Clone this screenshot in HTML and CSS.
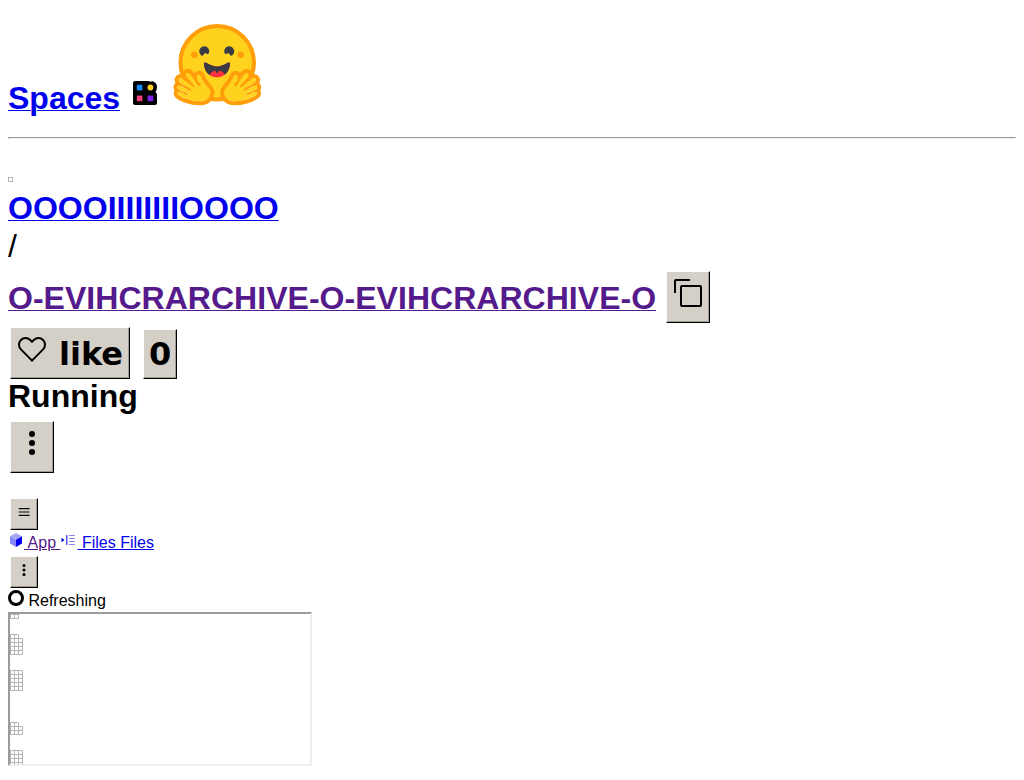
FILE: index.html
```html
<!DOCTYPE html>
<html lang="en">
<head>
<meta charset="utf-8">
<title>Spaces</title>
<link rel="stylesheet" href="styles.css">
</head>
<body>
<header class="top">
<a class="spaces" href="#top">Spaces</a>
<svg class="icon-lg" viewBox="0 0 32 32"><path d="M6 4H19Q21 4 21.500 4.800Q23 4 24 4.400Q28 5.500 28 10Q28 13 26.500 15Q28 16 28 18V26Q28 28 26 28H6Q4 28 4 26V6Q4 4 6 4Z"/><path fill="#0e88ff" d="M7.800 7.800h5.600v5.600H7.800z"/><circle cx="21.400" cy="10.500" r="2.900" fill="#ffd21e"/><path fill="#f1407b" d="M7.800 18.600h5.600v5.600H7.800z"/><path fill="#8020e8" d="M18.600 18.600h5.600v5.600h-5.600z"/></svg>
<svg class="face" viewBox="0 0 95 88"><circle cx="47.21" cy="41.75" r="36.75" fill="#ffd21e" stroke="#ff9d0b" stroke-width="4"/><path fill="#3a3b45" d="M58.5 32.3c1.28.44 1.78 3.06 3.07 2.38a5 5 0 1 0-6.76-2.07c.61 1.15 2.55-.72 3.7-.32ZM34.95 32.3c-1.28.44-1.79 3.06-3.07 2.38a5 5 0 1 1 6.76-2.07c-.61 1.15-2.56-.72-3.7-.32Z"/><path fill="#ff323d" d="M46.96 56.29c9.83 0 13-8.76 13-13.26 0-2.34-1.57-1.6-4.09-.36-2.33 1.15-5.46 2.74-8.9 2.74-7.19 0-13-6.88-13-2.38s3.16 13.26 13 13.26Z"/><path fill="#3a3b45" d="M39.43 54a8.7 8.7 0 0 1 5.3-4.49c.4-.12.81.57 1.24 1.28.4.68.82 1.37 1.24 1.37.45 0 .9-.68 1.33-1.35.45-.7.89-1.38 1.32-1.25a8.61 8.61 0 0 1 5 4.17c3.73-2.94 5.1-7.74 5.1-10.7 0-2.34-1.57-1.6-4.09-.36l-.14.07c-2.31 1.15-5.39 2.67-8.77 2.67s-6.45-1.52-8.77-2.67c-2.6-1.29-4.23-2.1-4.23.29 0 3.05 1.46 8.06 5.47 10.97Z"/><circle cx="70.71" cy="33.75" r="3.25" fill="#ff9d0b"/><circle cx="24.21" cy="33.75" r="3.25" fill="#ff9d0b"/>
<defs><g id="hand"><path fill="#ff9d0b" d="M17.52 48c-1.62 0-3.06.66-4.07 1.87a5.97 5.97 0 0 0-1.33 3.76 7.1 7.1 0 0 0-1.94-.3c-1.55 0-2.95.59-3.94 1.66a5.8 5.8 0 0 0-.8 7 5.3 5.3 0 0 0-1.79 2.82c-.24.9-.48 2.8.8 4.74a5.22 5.22 0 0 0-.37 5.02c1.02 2.32 3.57 4.14 8.52 6.1 3.07 1.22 5.89 2 5.91 2.01a44.33 44.33 0 0 0 10.93 1.6c5.86 0 10.05-1.8 12.46-5.34 3.88-5.69 3.33-10.9-1.7-15.92-2.77-2.78-4.62-6.87-5-7.77-.78-2.66-2.84-5.62-6.25-5.62a5.7 5.7 0 0 0-4.6 2.46c-1-1.26-1.98-2.25-2.86-2.82A7.4 7.4 0 0 0 17.52 48Zm0 4c.51 0 1.14.22 1.82.65 2.14 1.36 6.25 8.43 7.76 11.18.5.92 1.37 1.31 2.14 1.31 1.55 0 2.75-1.53.15-3.48-3.92-2.93-2.55-7.72-.68-8.01.08-.02.17-.02.24-.02 1.7 0 2.45 2.93 2.45 2.93s2.2 5.52 5.98 9.3c3.77 3.77 3.97 6.8 1.22 10.83-1.88 2.75-5.47 3.58-9.16 3.58-3.81 0-7.73-.9-9.92-1.46-.11-.03-13.45-3.8-11.76-7 .28-.54.75-.76 1.34-.76 2.38 0 6.7 3.54 8.57 3.54.41 0 .7-.17.83-.6.79-2.85-12.06-4.05-10.98-8.17.2-.73.71-1.02 1.44-1.02 3.14 0 10.2 5.53 11.68 5.53.11 0 .2-.03.24-.1.74-1.2.33-2.04-4.9-5.2-5.21-3.16-8.88-5.06-6.8-7.33.24-.26.58-.38 1-.38 3.17 0 10.66 6.82 10.66 6.82s2.02 2.1 3.25 2.1c.28 0 .52-.1.68-.38.86-1.46-8.06-8.22-8.56-11.01-.34-1.9.24-2.85 1.31-2.85Z"/><path fill="#ffd21e" d="M38.6 76.69c2.75-4.04 2.55-7.07-1.22-10.84-3.78-3.77-5.98-9.3-5.98-9.3s-.82-3.2-2.69-2.9c-1.87.3-3.24 5.08.68 8.01 3.91 2.93-.78 4.92-2.29 2.17-1.5-2.75-5.62-9.82-7.76-11.18-2.13-1.35-3.63-.6-3.13 2.2.5 2.79 9.43 9.55 8.56 11-.87 1.47-3.93-1.71-3.93-1.71s-9.57-8.71-11.66-6.44c-2.08 2.27 1.59 4.17 6.8 7.33 5.23 3.16 5.64 4 4.9 5.2-.75 1.2-12.28-8.53-13.36-4.4-1.08 4.11 11.77 5.3 10.98 8.15-.8 2.85-9.06-5.38-10.74-2.18-1.7 3.21 11.65 6.98 11.76 7.01 4.3 1.12 15.25 3.49 19.08-2.12Z"/></g></defs>
<use href="#hand"/><use href="#hand" transform="translate(94.6 0) scale(-1 1)"/></svg>
</header>
<hr class="rule">
<main>
<div class="avatar"></div>
<div class="owner"><a href="#owner">OOOOIIIIIIIIOOOO</a></div>
<div class="slash">/</div>
<div class="repo"><a class="visited" href="#repo">O-EVIHCRARCHIVE-O-EVIHCRARCHIVE-O</a>
<button class="btn copy" aria-label="Copy"><svg class="icon-lg" viewBox="0 0 32 32"><path d="M28 10v18H10V10h18m0-2H10a2 2 0 0 0-2 2v18a2 2 0 0 0 2 2h18a2 2 0 0 0 2-2V10a2 2 0 0 0-2-2Z"/><path d="M4 16H2V4a2 2 0 0 1 2-2h14v2H4Z"/></svg></button></div>
<div class="likes"><button class="btn like"><svg class="icon-lg" viewBox="0 0 32 32"><path d="M22.45 6a5.47 5.47 0 0 1 3.91 1.64 5.7 5.7 0 0 1 0 8L16 26.13 5.64 15.64a5.7 5.7 0 0 1 0-8 5.48 5.48 0 0 1 7.82 0l2.54 2.6 2.53-2.58A5.44 5.44 0 0 1 22.45 6m0-2a7.47 7.47 0 0 0-5.34 2.24L16 7.36l-1.11-1.12a7.49 7.49 0 0 0-10.68 0 7.72 7.72 0 0 0 0 10.82L16 29l11.79-11.94a7.72 7.72 0 0 0 0-10.82A7.49 7.49 0 0 0 22.45 4Z"/></svg><span>like</span></button><button class="btn count">0</button></div>
<div class="status">Running</div>
<button class="btn more" aria-label="More"><svg class="icon-lg" viewBox="0 0 32 32"><circle cx="16" cy="7" r="3"/><circle cx="16" cy="16" r="3"/><circle cx="16" cy="25" r="3"/></svg></button>
<button class="btn small menu" aria-label="Menu"><svg class="icon-sm" viewBox="0 0 16 16"><path d="M2.800 4h10.700v1.200H2.800zM2.800 7.400h10.700v1.200H2.800zM2.800 10.800h10.700V12H2.800z"/></svg></button>
<nav class="tabs"><a class="visited" href="#app"><svg class="icon-sm" viewBox="0 0 16 16"><path fill="#a5a5f5" d="M8 1l6 3.2L8 7.7 2 4.2z"/><path fill="#8585f3" d="M2 4.2l6 3.500V15l-6-3.600z"/><path fill="#0000ee" d="M14 4.2L8 7.7V15l6-3.600z"/></svg> App </a><a href="#files"><svg class="icon-sm files" viewBox="0 0 16 16"><path fill="#0000ee" d="M.5 5.800L3.500 8l-3 2.200z"/><path fill="#5555f3" d="M5 3h1.500v10H5z"/><path fill="#8888f5" d="M8 3h6v1H8zM8 6h6v1H8zM8 9h6v1H8zM8 12h6v1H8z"/></svg> Files Files</a></nav>
<button class="btn small" aria-label="More"><svg class="icon-sm" viewBox="0 0 32 32"><circle cx="16" cy="7" r="3"/><circle cx="16" cy="16" r="3"/><circle cx="16" cy="25" r="3"/></svg></button>
<div class="refresh"><svg class="icon-sm" viewBox="0 0 16 16"><circle cx="8" cy="8" r="6.500" fill="none" stroke="#000" stroke-width="3"/></svg> <span>Refreshing</span></div>
<div class="frame"><svg class="cells" viewBox="0 0 14 150"><path d="M.5 0V4.5h8V0M4.5 0v4.5M.5.5h8M.5 24.5V20.5h8v4M4.5 20.5v20M.5 24.5h12v16H.5zM.5 28.5h12M.5 32.5h12M.5 36.5h12M8.5 24.5v16M.5 56.5h12v20H.5zM.5 60.5h12M.5 64.5h12M.5 68.5h12M.5 72.5h12M4.5 56.5v20M8.5 56.5v20M.5 112.5v-4h8v4M4.5 108.5v12M.5 112.5h12v8H.5zM.5 116.5h12M8.5 112.5v8M.5 136.5h12V150M.5 136.5V150M4.5 136.5V150M8.5 136.5V150M.5 140.5h12M.5 144.5h12M.5 148.5h12"/></svg></div>
</main>
</body>
</html>
```

FILE: styles.css
```css
body { margin: 8px; background: #fff; color: #000; font: 16px/18px "Liberation Sans", Arial, sans-serif; overflow: hidden; }
svg { vertical-align: baseline; }
a { color: #0000ee; text-decoration-thickness: 1px; }
a.visited { color: #551a8b; }
.icon-lg { width: 32px; height: 32px; }
.icon-sm { width: 16px; height: 16px; }
.face { width: 95px; height: 88px; }
.top { box-sizing: border-box; height: 129px; padding-top: 13px; font-size: 32px; font-weight: bold; line-height: 36px; white-space: nowrap; }
.spaces { display: inline-block; width: 112px; }
.rule { margin: 0; height: 2px; box-sizing: border-box; border: 1px solid; border-color: #9a9a9a #eee #eee #9a9a9a; }
.avatar { box-sizing: border-box; width: 5px; height: 5px; margin-top: 38px; border: 1px solid #b4b4b4; }
.owner { margin-top: 8px; height: 38px; font-size: 32px; font-weight: bold; line-height: 36px; letter-spacing: .03px; }
.slash { height: 43px; font-size: 32px; line-height: 36px; }
.repo { display: flex; gap: 10px; height: 52px; font-size: 32px; font-weight: bold; line-height: 54px; letter-spacing: .03px; }
.btn { box-sizing: border-box; display: flex; margin: 0; padding: 5px; border: 1px solid; border-color: #fff #000 #000 #fff; box-shadow: inset -1px -1px #a09c94; background: #d4d0c8; color: #000; font: bold 32px/38px "DejaVu Sans", sans-serif; width: 44px; height: 52px; }
.likes { display: flex; align-items: flex-end; gap: 13px; height: 52px; margin: 4px 0 0 2px; }
.like { width: 120px; gap: 11px; }
.like span { margin-top: 2px; }
.count { width: 34px; height: 50px; }
.status { font-size: 32px; line-height: 36px; font-weight: bold; margin-top: -1px; height: 43px; }
.more { margin-left: 2px; }
.small { width: 28px; height: 32px; margin-left: 2px; }
.menu { margin-top: 25px; }
.tabs { margin-top: 2px; height: 24px; line-height: 22px; }
.files { margin-left: 1px; }
.refresh { height: 24px; line-height: 26px; }
.frame { box-sizing: border-box; width: 304px; height: 154px; border: 2px solid; border-color: #9a9a9a #eee #eee #9a9a9a; overflow: hidden; }
.cells { display: block; width: 14px; height: 150px; fill: none; stroke: #b4b4b4; }
```
